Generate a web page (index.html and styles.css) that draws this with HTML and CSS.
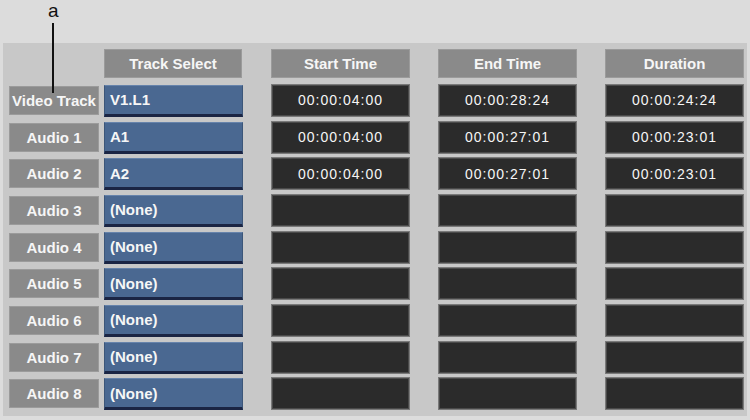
FILE: index.html
```html
<!DOCTYPE html>
<html lang="en">
<head>
    <meta charset="UTF-8">
    <title>Track Select</title>
    <link rel="stylesheet" href="styles.css">
</head>
<body>
    <div class="callout">
        <span class="callout-letter">a</span>
        <span class="callout-line"></span>
    </div>
    <div class="panel">
        <div class="row head-row">
            <div class="spacer"></div>
            <div class="head sel">Track Select</div>
            <div class="head time">Start Time</div>
            <div class="head time">End Time</div>
            <div class="head time">Duration</div>
        </div>
        <div class="row">
            <div class="label">Video Track</div>
            <div class="select">V1.L1</div>
            <div class="cell">00:00:04:00</div>
            <div class="cell">00:00:28:24</div>
            <div class="cell">00:00:24:24</div>
        </div>
        <div class="row">
            <div class="label">Audio 1</div>
            <div class="select">A1</div>
            <div class="cell">00:00:04:00</div>
            <div class="cell">00:00:27:01</div>
            <div class="cell">00:00:23:01</div>
        </div>
        <div class="row">
            <div class="label">Audio 2</div>
            <div class="select">A2</div>
            <div class="cell">00:00:04:00</div>
            <div class="cell">00:00:27:01</div>
            <div class="cell">00:00:23:01</div>
        </div>
        <div class="row">
            <div class="label">Audio 3</div>
            <div class="select">(None)</div>
            <div class="cell"></div>
            <div class="cell"></div>
            <div class="cell"></div>
        </div>
        <div class="row">
            <div class="label">Audio 4</div>
            <div class="select">(None)</div>
            <div class="cell"></div>
            <div class="cell"></div>
            <div class="cell"></div>
        </div>
        <div class="row">
            <div class="label">Audio 5</div>
            <div class="select">(None)</div>
            <div class="cell"></div>
            <div class="cell"></div>
            <div class="cell"></div>
        </div>
        <div class="row">
            <div class="label">Audio 6</div>
            <div class="select">(None)</div>
            <div class="cell"></div>
            <div class="cell"></div>
            <div class="cell"></div>
        </div>
        <div class="row">
            <div class="label">Audio 7</div>
            <div class="select">(None)</div>
            <div class="cell"></div>
            <div class="cell"></div>
            <div class="cell"></div>
        </div>
        <div class="row">
            <div class="label">Audio 8</div>
            <div class="select">(None)</div>
            <div class="cell"></div>
            <div class="cell"></div>
            <div class="cell"></div>
        </div>
    </div>
</body>
</html>
```
FILE: styles.css
```css
body {
    margin: 0;
    background-color: #dcdcdc;
    font-family: "Liberation Sans", Arial, sans-serif;
    color: #f6f6f6;
}

.callout {
    position: relative;
    height: 43px;
}

.callout-letter {
    position: absolute;
    left: 48px;
    top: 0;
    font-size: 19px;
    line-height: 22px;
    color: #111;
}

.callout-line {
    position: absolute;
    left: 52px;
    top: 23px;
    width: 2px;
    height: 70px;
    background-color: #111;
    z-index: 2;
}

.panel {
    margin: 0 3px;
    background-color: #c8c8c8;
    padding: 6px 3px 6px 6px;
    display: flex;
    flex-direction: column;
    gap: 3.67px;
}

.row {
    display: flex;
    height: 33px;
    align-items: center;
}

.head-row {
    height: 29px;
    margin-bottom: 2.33px;
}

.spacer {
    width: 90px;
}

.head, .label {
    background-color: #8a8a8a;
    border: 1px solid #9b9b9b;
    box-sizing: border-box;
    font-size: 15px;
    font-weight: bold;
    display: flex;
    align-items: center;
    justify-content: center;
    white-space: nowrap;
}

.head {
    height: 29px;
    width: 139px;
    margin-left: 28px;
}

.head.sel {
    margin-left: 5px;
    width: 138px;
    margin-right: 1px;
}

.label {
    width: 90px;
    height: 29px;
}

.select {
    width: 139px;
    height: 32px;
    align-self: flex-end;
    margin-left: 5px;
    box-sizing: border-box;
    background-color: #4a6891;
    border-top: 1px solid #6683ab;
    border-left: 1px solid #3c5679;
    border-right: 1px solid #3c5679;
    border-bottom: 3px solid #1b2544;
    font-size: 15px;
    font-weight: bold;
    padding-left: 5px;
    display: flex;
    align-items: center;
}

.cell {
    width: 139px;
    height: 33px;
    margin-left: 28px;
    box-sizing: border-box;
    background-color: #2b2b2b;
    border: 1px solid #7a7a7a;
    box-shadow: inset 0 0 0 1px #4a4a4a;
    font-size: 14px;
    letter-spacing: 1px;
    display: flex;
    align-items: center;
    justify-content: center;
}
```
